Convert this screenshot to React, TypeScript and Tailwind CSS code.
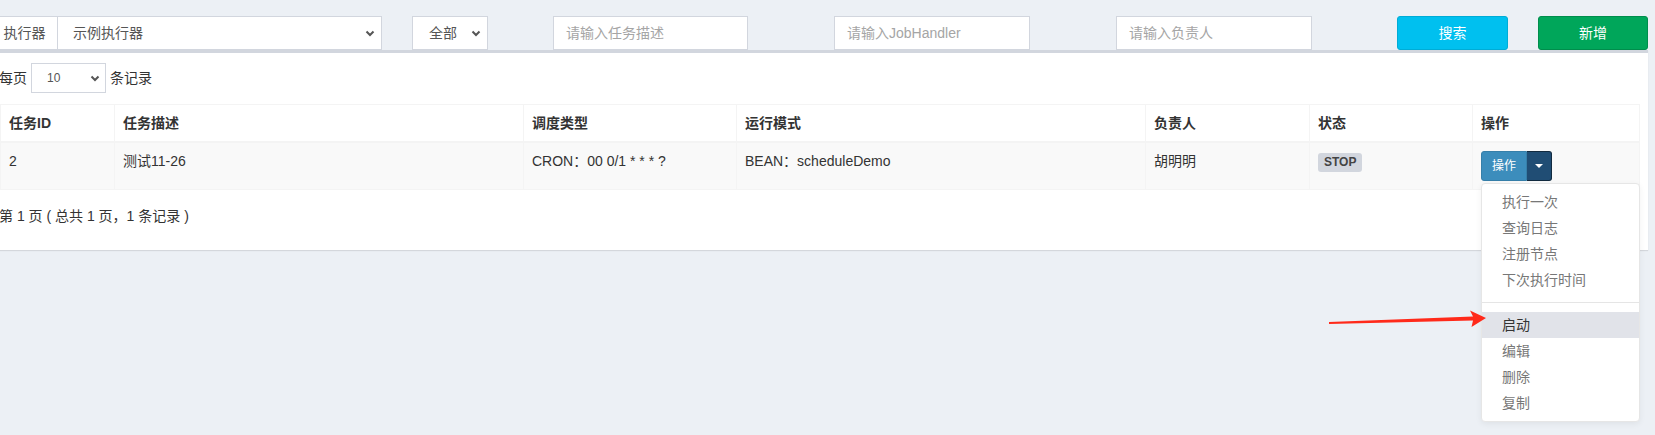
import React from "react";

function Chevron({ className = "" }: { className?: string }) {
  return (
    <svg width="10" height="7" viewBox="0 0 10 7" className={className}>
      <polyline points="1.5,1.5 5,5 8.5,1.5" fill="none" stroke="#555" strokeWidth="2" />
    </svg>
  );
}

const menuTop = ["执行一次", "查询日志", "注册节点", "下次执行时间"];
const menuBottom = ["启动", "编辑", "删除", "复制"];

export default function App() {
  return (
    <div
      className="relative w-[1655px] h-[435px] overflow-hidden bg-[#ecf0f5] text-[14px] leading-[20px] text-[#333]"
      style={{ fontFamily: '"Liberation Sans", "Noto Sans CJK SC", sans-serif' }}
    >
      {/* search form */}
      <div className="flex pt-4 h-[50px]">
        <div className="flex ml-[-9px]">
          <div className="w-[66px] h-[34px] border border-r-0 border-[#d2d6de] bg-white flex items-center justify-center text-[#555]">
            执行器
          </div>
          <div className="w-[325px] h-[34px] border border-[#d2d6de] bg-white flex items-center justify-between pl-[15px] pr-[6px] text-[#555]">
            <span>示例执行器</span>
            <Chevron />
          </div>
        </div>
        <div className="ml-[30px] w-[76px] h-[34px] border border-[#d2d6de] bg-white flex items-center justify-between pl-[16px] pr-[6px] text-[#555]">
          <span>全部</span>
          <Chevron />
        </div>
        <div className="ml-[65px] w-[195px] h-[34px] border border-[#d2d6de] bg-white flex items-center px-3 text-[#a5a5a5]">
          请输入任务描述
        </div>
        <div className="ml-[86px] w-[196px] h-[34px] border border-[#d2d6de] bg-white flex items-center px-3 text-[#a5a5a5]">
          请输入JobHandler
        </div>
        <div className="ml-[86px] w-[196px] h-[34px] border border-[#d2d6de] bg-white flex items-center px-3 text-[#a5a5a5]">
          请输入负责人
        </div>
        <button className="ml-[85px] w-[111px] h-[34px] rounded-[3px] border border-[#00acd6] bg-[#00c0ef] text-white">
          搜索
        </button>
        <button className="ml-[30px] w-[110px] h-[34px] rounded-[3px] border border-[#008d4c] bg-[#00a65a] text-white">
          新增
        </button>
      </div>

      {/* box */}
      <div className="ml-[-10px] w-[1658px] h-[200px] border-t-[3px] border-[#d2d6de] bg-white pl-[10px] shadow-[0_1px_1px_rgba(0,0,0,0.1)]">
        <div className="flex items-center h-[30px] mt-[10px] -ml-px">
          <span>每页</span>
          <div className="mx-1 w-[75px] h-[30px] border border-[#d2d6de] flex items-center justify-between pl-[15px] pr-[5px] text-[12px] text-[#555]">
            <span>10</span>
            <Chevron />
          </div>
          <span>条记录</span>
        </div>

        <table className="mt-[11px] w-[1639px] table-fixed border-collapse">
          <colgroup>
            <col className="w-[114px]" />
            <col className="w-[409px]" />
            <col className="w-[213px]" />
            <col className="w-[409px]" />
            <col className="w-[164px]" />
            <col className="w-[163px]" />
            <col className="w-[167px]" />
          </colgroup>
          <thead>
            <tr>
              {["任务ID", "任务描述", "调度类型", "运行模式", "负责人", "状态", "操作"].map((h) => (
                <th
                  key={h}
                  className="border border-b-2 border-[#f4f4f4] p-2 text-left font-bold"
                >
                  {h}
                </th>
              ))}
            </tr>
          </thead>
          <tbody>
            <tr className="bg-[#f9f9f9] align-top">
              <td className="border border-[#f4f4f4] p-2">2</td>
              <td className="border border-[#f4f4f4] p-2">测试11-26</td>
              <td className="border border-[#f4f4f4] p-2">CRON：00 0/1 * * * ?</td>
              <td className="border border-[#f4f4f4] p-2">BEAN：scheduleDemo</td>
              <td className="border border-[#f4f4f4] p-2">胡明明</td>
              <td className="border border-[#f4f4f4] p-2">
                <span className="inline-block mt-[2px] px-[6px] py-[2px] leading-[15px] rounded-[3px] bg-[#d2d6de] text-[#444] text-[12px] font-bold">
                  STOP
                </span>
              </td>
              <td className="border border-[#f4f4f4] p-2">
                <div className="relative inline-flex">
                  <button className="h-[30px] w-[46px] rounded-l-[3px] border border-[#367fa9] bg-[#3c8dbc] text-white text-[12px]">
                    操作
                  </button>
                  <button className="h-[30px] w-[25px] rounded-r-[3px] border border-l-0 border-[#122b40] bg-[#204d74] flex items-center justify-center">
                    <span className="w-0 h-0 border-x-[4px] border-x-transparent border-t-[4px] border-t-white" />
                  </button>
                  <div className="absolute left-0 top-[calc(100%+2px)] z-10 w-[159px] py-[5px] rounded-[4px] border border-[#e6e6e6] bg-white shadow-[0_2px_6px_rgba(0,0,0,0.06)]">
                    {menuTop.map((m) => (
                      <div key={m} className="px-5 py-[3px] text-[#777] whitespace-nowrap">
                        {m}
                      </div>
                    ))}
                    <div className="my-[9px] h-px bg-[#e5e5e5]" />
                    {menuBottom.map((m, i) => (
                      <div
                        key={m}
                        className={
                          i === 0
                            ? "px-5 py-[3px] bg-[#e1e3e9] text-[#333]"
                            : "px-5 py-[3px] text-[#777]"
                        }
                      >
                        {m}
                      </div>
                    ))}
                  </div>
                </div>
              </td>
            </tr>
          </tbody>
        </table>

        <div className="pt-4 -ml-px">第 1 页 ( 总共 1 页，1 条记录 )</div>
      </div>

      {/* red annotation arrow */}
      <svg
        className="absolute left-0 top-0 pointer-events-none z-20"
        width="1655"
        height="435"
        viewBox="0 0 1655 435"
      >
        <polygon
          points="1329,322 1329,324 1473,320.5 1471.5,327 1486,318 1470,310.5 1473,316.5"
          fill="#ff2a1a"
        />
      </svg>
    </div>
  );
}
